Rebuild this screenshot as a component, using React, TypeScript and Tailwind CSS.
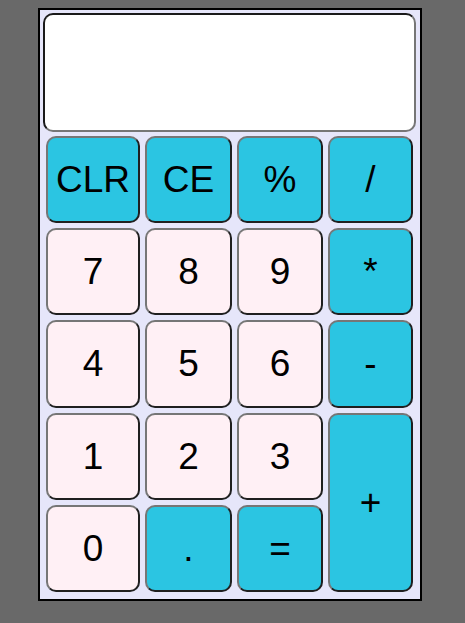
import React from "react";

type Btn = { label: string; kind: "op" | "num"; cls: string };

const buttons: Btn[] = [
  { label: "CLR", kind: "op", cls: "" },
  { label: "CE", kind: "op", cls: "" },
  { label: "%", kind: "op", cls: "" },
  { label: "/", kind: "op", cls: "" },
  { label: "7", kind: "num", cls: "" },
  { label: "8", kind: "num", cls: "" },
  { label: "9", kind: "num", cls: "" },
  { label: "*", kind: "op", cls: "" },
  { label: "4", kind: "num", cls: "" },
  { label: "5", kind: "num", cls: "" },
  { label: "6", kind: "num", cls: "" },
  { label: "-", kind: "op", cls: "" },
  { label: "1", kind: "num", cls: "" },
  { label: "2", kind: "num", cls: "" },
  { label: "3", kind: "num", cls: "" },
  { label: "+", kind: "op", cls: "row-span-2" },
  { label: "0", kind: "num", cls: "" },
  { label: ".", kind: "op", cls: "" },
  { label: "=", kind: "op", cls: "" },
];

export default function App() {
  return (
    <div className="w-[465px] h-[623px] bg-[#696969] pl-[38px] pt-[8px] font-['Liberation_Sans',Arial,sans-serif]">
      <div className="w-[384px] h-[593px] border-2 border-black bg-[#e6e6fa] pt-[3px] pl-[3px]">
        <div className="w-[373px] h-[119px] bg-white rounded-[10px] border-2 border-t-[#1a1a1a] border-l-[#1a1a1a] border-b-[#767676] border-r-[#767676]" />
        <div className="mt-[4px] ml-[3px] h-[456px] grid grid-cols-[94px_87px_86px_85px] grid-rows-5 gap-[5px]">
          {buttons.map((b) => (
            <button
              key={b.label}
              className={`${b.cls} ${
                b.kind === "op" ? "bg-[#2bc5e2]" : "bg-[#fff0f5]"
              } rounded-[10px] border-2 border-t-[#767676] border-l-[#767676] border-b-[#1f1f1f] border-r-[#1f1f1f] text-[37px] leading-none text-black flex items-center justify-center p-0`}
            >
              {b.label}
            </button>
          ))}
        </div>
      </div>
    </div>
  );
}
